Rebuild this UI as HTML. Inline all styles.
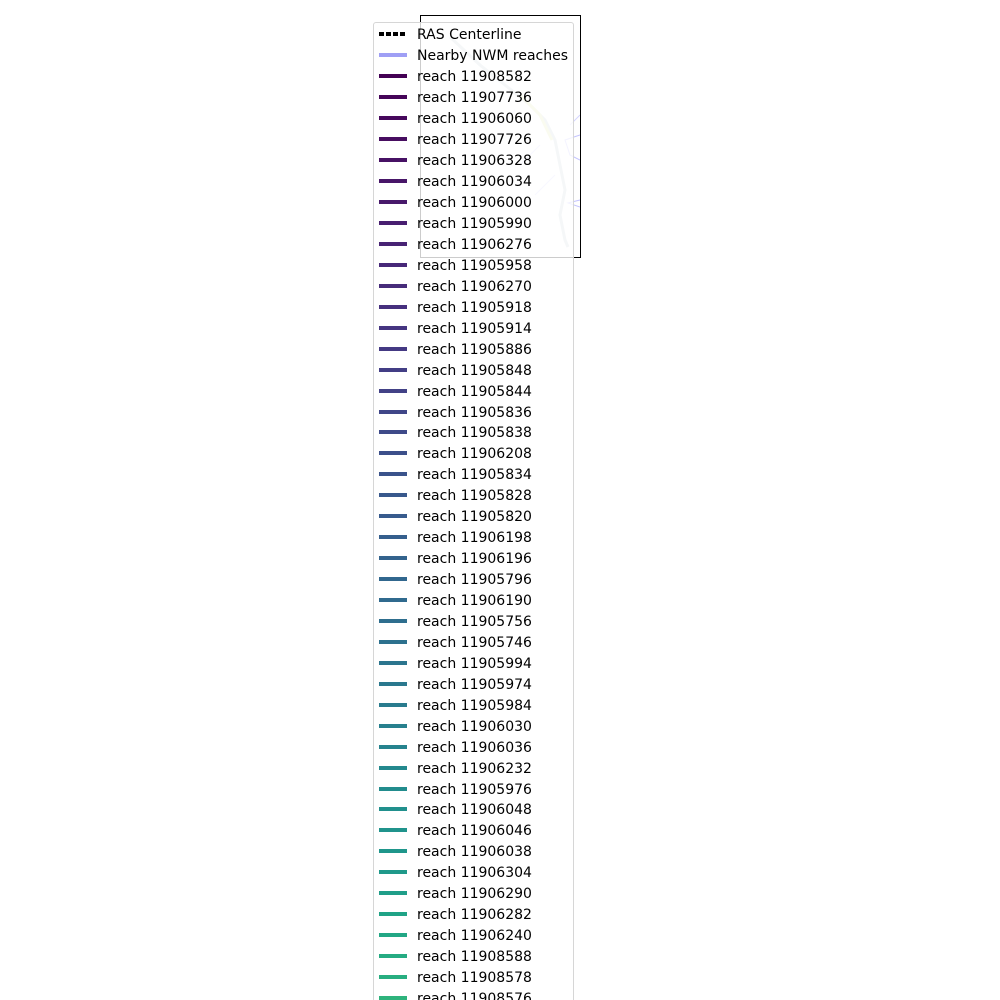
<!DOCTYPE html>
<html><head><meta charset="utf-8"><style>
html,body{margin:0;padding:0;background:#fff;width:1000px;height:1000px;overflow:hidden;position:relative;font-family:"DejaVu Sans","Liberation Sans",sans-serif;}
.ax{position:absolute;left:420px;top:15px;width:161px;height:243px;border:1px solid #000;box-sizing:border-box;}
.leg{position:absolute;left:373px;top:22px;width:201px;height:1000px;border:1px solid #d6d6d6;border-radius:3px;background:rgba(255,255,255,0.8);box-sizing:border-box;}
.r{position:absolute;left:379px;height:20px;font-size:14px;line-height:20px;color:#000;white-space:nowrap;margin-top:2px;}
.r i{position:absolute;left:0;top:7px;width:28px;height:4px;}
.r span{position:absolute;left:38px;top:0;}
</style></head><body>
<div class="ax"></div>
<svg style="position:absolute;left:420px;top:15px" width="160" height="242">
<g fill="none" stroke-width="1" opacity="0.5">
<path d="M30 22 L60 50 L85 70 L110 90 L125 105 L135 125 L140 150 L145 175 L140 200 L145 225 L148 232" stroke="#9ab" stroke-width="3"/>
<path d="M100 80 L120 100 L132 125" stroke="#cfd86a" stroke-width="3"/>
<path d="M160 120 L145 125 L150 140 L160 145" stroke="#8888ff"/>
<path d="M160 185 L148 188 L160 192" stroke="#8888ff"/>
<path d="M95 95 L80 110 M120 130 L100 150 M135 160 L115 180 M150 110 L160 100" stroke="#aaaaff"/>
</g></svg>
<div class="leg"></div>
<div class="r" style="top:23px"><i style="background:repeating-linear-gradient(90deg,#000 0 5px,transparent 5px 7px);height:4px"></i><span>RAS Centerline</span></div>
<div class="r" style="top:44px"><i style="background:#9f9ff5"></i><span>Nearby NWM reaches</span></div>
<div class="r" style="top:65px"><i style="background:#440154"></i><span>reach 11908582</span></div>
<div class="r" style="top:86px"><i style="background:#450558"></i><span>reach 11907736</span></div>
<div class="r" style="top:107px"><i style="background:#46085c"></i><span>reach 11906060</span></div>
<div class="r" style="top:128px"><i style="background:#470d60"></i><span>reach 11907726</span></div>
<div class="r" style="top:149px"><i style="background:#471164"></i><span>reach 11906328</span></div>
<div class="r" style="top:170px"><i style="background:#481668"></i><span>reach 11906034</span></div>
<div class="r" style="top:191px"><i style="background:#48196b"></i><span>reach 11906000</span></div>
<div class="r" style="top:212px"><i style="background:#481e70"></i><span>reach 11905990</span></div>
<div class="r" style="top:233px"><i style="background:#482374"></i><span>reach 11906276</span></div>
<div class="r" style="top:254px"><i style="background:#472878"></i><span>reach 11905958</span></div>
<div class="r" style="top:275px"><i style="background:#472c7a"></i><span>reach 11906270</span></div>
<div class="r" style="top:296px"><i style="background:#46307e"></i><span>reach 11905918</span></div>
<div class="r" style="top:317px"><i style="background:#453581"></i><span>reach 11905914</span></div>
<div class="r" style="top:338px"><i style="background:#443983"></i><span>reach 11905886</span></div>
<div class="r" style="top:359px"><i style="background:#433e85"></i><span>reach 11905848</span></div>
<div class="r" style="top:380px"><i style="background:#424186"></i><span>reach 11905844</span></div>
<div class="r" style="top:401px"><i style="background:#404688"></i><span>reach 11905836</span></div>
<div class="r" style="top:421px"><i style="background:#3e4a89"></i><span>reach 11905838</span></div>
<div class="r" style="top:442px"><i style="background:#3c4f8a"></i><span>reach 11906208</span></div>
<div class="r" style="top:463px"><i style="background:#3a538b"></i><span>reach 11905834</span></div>
<div class="r" style="top:484px"><i style="background:#38588c"></i><span>reach 11905828</span></div>
<div class="r" style="top:505px"><i style="background:#375b8d"></i><span>reach 11905820</span></div>
<div class="r" style="top:526px"><i style="background:#355f8d"></i><span>reach 11906198</span></div>
<div class="r" style="top:547px"><i style="background:#33638d"></i><span>reach 11906196</span></div>
<div class="r" style="top:568px"><i style="background:#31678e"></i><span>reach 11905796</span></div>
<div class="r" style="top:589px"><i style="background:#306a8e"></i><span>reach 11906190</span></div>
<div class="r" style="top:610px"><i style="background:#2e6e8e"></i><span>reach 11905756</span></div>
<div class="r" style="top:631px"><i style="background:#2d718e"></i><span>reach 11905746</span></div>
<div class="r" style="top:652px"><i style="background:#2b758e"></i><span>reach 11905994</span></div>
<div class="r" style="top:673px"><i style="background:#2a788e"></i><span>reach 11905974</span></div>
<div class="r" style="top:694px"><i style="background:#297b8e"></i><span>reach 11905984</span></div>
<div class="r" style="top:715px"><i style="background:#27808e"></i><span>reach 11906030</span></div>
<div class="r" style="top:736px"><i style="background:#26838e"></i><span>reach 11906036</span></div>
<div class="r" style="top:757px"><i style="background:#24898e"></i><span>reach 11906232</span></div>
<div class="r" style="top:778px"><i style="background:#228c8d"></i><span>reach 11905976</span></div>
<div class="r" style="top:798px"><i style="background:#21908d"></i><span>reach 11906048</span></div>
<div class="r" style="top:819px"><i style="background:#20938c"></i><span>reach 11906046</span></div>
<div class="r" style="top:840px"><i style="background:#1f968b"></i><span>reach 11906038</span></div>
<div class="r" style="top:861px"><i style="background:#1f998a"></i><span>reach 11906304</span></div>
<div class="r" style="top:882px"><i style="background:#1f9e89"></i><span>reach 11906290</span></div>
<div class="r" style="top:903px"><i style="background:#20a386"></i><span>reach 11906282</span></div>
<div class="r" style="top:924px"><i style="background:#22a785"></i><span>reach 11906240</span></div>
<div class="r" style="top:945px"><i style="background:#25ab82"></i><span>reach 11908588</span></div>
<div class="r" style="top:966px"><i style="background:#28ae80"></i><span>reach 11908578</span></div>
<div class="r" style="top:987px"><i style="background:#2eb37c"></i><span>reach 11908576</span></div>
</body></html>
